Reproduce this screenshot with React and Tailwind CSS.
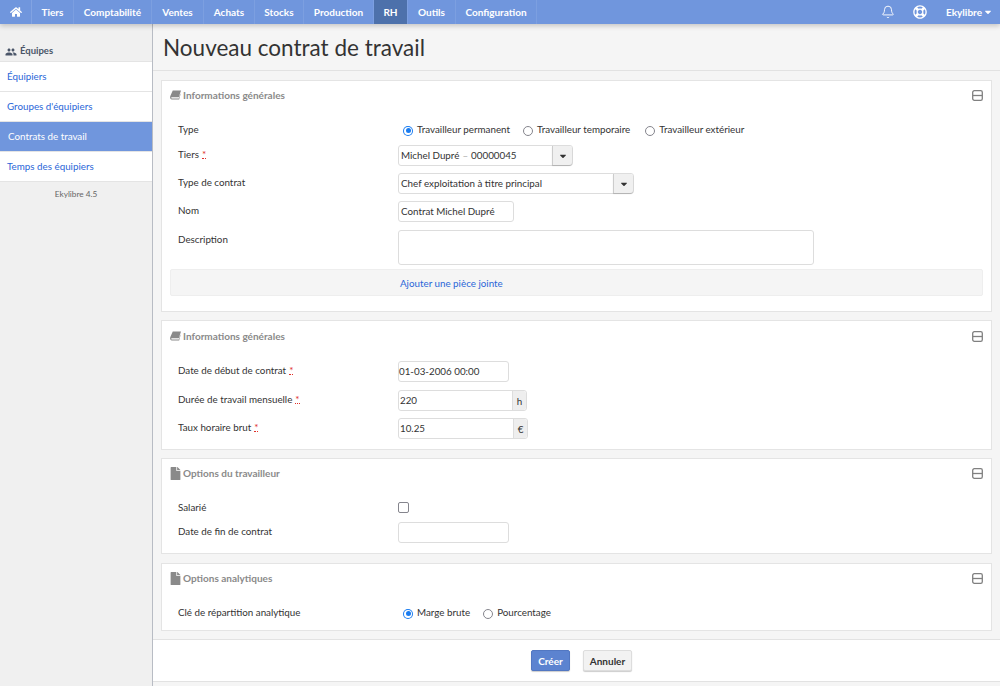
import React from 'react';
import { FaHome, FaFile, FaRegLifeRing, FaCaretDown } from 'react-icons/fa';
import { MdPeople } from 'react-icons/md';
import { Bell } from 'lucide-react';

const navItems = [
  { label: 'Tiers', w: 'w-[42px]' },
  { label: 'Comptabilité', w: 'w-[78px]' },
  { label: 'Ventes', w: 'w-[52px]' },
  { label: 'Achats', w: 'w-[51px]' },
  { label: 'Stocks', w: 'w-[49px]' },
  { label: 'Production', w: 'w-[70px]' },
  { label: 'RH', w: 'w-[34px]', active: true },
  { label: 'Outils', w: 'w-[48px]' },
  { label: 'Configuration', w: 'w-[81px]' },
];

const sideItems = [
  { label: 'Équipiers' },
  { label: "Groupes d'équipiers" },
  { label: 'Contrats de travail', active: true },
  { label: 'Temps des équipiers' },
];

const BookIcon = ({ className = '' }) => (
  <svg viewBox="0 0 12 10" className={className} fill="currentColor">
    <path d="M3 0H12L9.6 7.4H2C1 7.4 1 8.8 2 8.8H9.6L11.4 3V4.5L10 9.8H2C-0.2 9.8 -0.2 7 0.6 5.6Z" />
  </svg>
);

const FileIcon = ({ className = '' }) => <FaFile className={className} />;

const CollapseIcon = () => (
  <svg viewBox="0 0 11 11" className="ml-auto w-[11px] h-[11px] text-[#808080]" fill="none" stroke="currentColor" strokeWidth="1.3">
    <rect x="0.7" y="0.7" width="9.6" height="9.6" rx="1.6" />
    <path d="M1 5.5H10" />
  </svg>
);

const Required = () => (
  <span className="ml-[3px] text-[#e0302a] border-b border-dotted border-[#e0302a] leading-[9px] inline-block h-[9px] text-[10px]">*</span>
);

const Label = ({ children, required }) => (
  <div className="w-[236px] pl-[16px] shrink-0 leading-[19px]">
    {children}
    {required && <Required />}
  </div>
);

const Radio = ({ checked, label, className = '' }) => (
  <span className={`flex items-center ${className}`}>
    {checked ? (
      <span className="w-[10px] h-[10px] rounded-full bg-[#1a7cf0] flex items-center justify-center mt-[3px]">
        <span className="w-[8px] h-[8px] rounded-full bg-white flex items-center justify-center">
          <span className="w-[5px] h-[5px] rounded-full bg-[#1a7cf0]" />
        </span>
      </span>
    ) : (
      <span className="w-[10px] h-[10px] rounded-full border border-[#85858d] bg-white mt-[3px]" />
    )}
    <span className="ml-[4px]">{label}</span>
  </span>
);

const Input = ({ value, className = '' }) => (
  <div className={`h-[21px] bg-white border border-[#dddddd] rounded-[3px] flex items-center pb-[1px] ${className}`}>
    {value}
  </div>
);

const SelectInput = ({ value, width, children }) => (
  <div className={`h-[21px] flex bg-white border border-[#dddddd] rounded-[3px] ${width}`}>
    <div className="flex-1 px-[2px] pb-[1px] flex items-center">{children || value}</div>
    <div className="w-[20px] bg-[#f0f0f0] border-l border-[#cccccc] flex items-center justify-center rounded-r-[3px] shadow-[0_1px_1px_rgba(0,0,0,0.2)]">
      <FaCaretDown className="w-[10px] h-[10px] text-[#333333]" />
    </div>
  </div>
);

const AddonInput = ({ value, addon, width }) => (
  <div className={`h-[21px] flex bg-white border border-[#dddddd] rounded-[3px] ${width}`}>
    <div className="flex-1 px-[1px] pb-[1px] flex items-center">{value}</div>
    <div className="w-[14px] bg-[#eeeeee] border-l border-[#dddddd] flex items-center justify-center rounded-r-[3px]">{addon}</div>
  </div>
);

const Panel = ({ icon: Icon, iconClass, title, className = '', children }) => (
  <section className={`bg-white border border-[#e4e4e4] mx-[8px] shrink-0 ${className}`}>
    <div className="flex items-center h-[28px] px-[8px]">
      <span className="w-[11px] flex justify-center mr-[2px] text-[#8a8a8a]">
        <Icon className={`shrink-0 ${iconClass}`} />
      </span>
      <span className="text-[#8a8a8a] font-bold text-[10px]">{title}</span>
      <CollapseIcon />
    </div>
    {children}
  </section>
);

export default function App() {
  return (
    <div className="w-[1000px] h-[686px] overflow-hidden bg-[#f5f5f5] text-[9.8px] leading-[14px] text-[#333333] flex flex-col" style={{ fontFamily: 'Lato, "Open Sans", sans-serif' }}>
      {/* Top nav */}
      <header className="h-[24px] shrink-0 bg-[#7096dd] flex items-stretch text-white font-bold text-[10px] shadow-[0_2px_5px_rgba(0,0,0,0.2)] relative z-10">
        <div className="w-[32px] border-r border-[#82a3e2] flex items-center justify-center">
          <FaHome className="w-[12px] h-[12px]" />
        </div>
        {navItems.map((item) => (
          <div
            key={item.label}
            className={`${item.w} border-r border-[#7c9fe0] flex items-center justify-center ${item.active ? 'bg-[#4d71ab]' : ''}`}
          >
            {item.label}
          </div>
        ))}
        <div className="ml-auto flex items-center">
          <Bell className="w-[14px] h-[14px] mr-[18px]" strokeWidth={1.6} />
          <FaRegLifeRing className="w-[14px] h-[14px] mr-[19px]" />
          <span className="mr-[1px]">Ekylibre</span>
          <FaCaretDown className="w-[10px] h-[10px] mr-[7px]" />
        </div>
      </header>

      <div className="flex-1 flex min-h-0">
        {/* Sidebar */}
        <aside className="w-[153px] shrink-0 bg-[#f0f0f0] border-r border-[#b8bcc4]">
          <div className="h-[37px] flex items-end pb-[3px] pl-[5px] font-bold text-[#4a5568] text-[9.5px]">
            <MdPeople className="w-[12px] h-[12px] mr-[3px]" />
            Équipes
          </div>
          <nav className="border-t border-[#e4e4e4]">
            {sideItems.map((item) => (
              <div
                key={item.label}
                className={`h-[30px] flex items-center border-b border-[#e4e4e4] pb-[1px] ${item.active ? 'bg-[#7096dd] text-white pl-[8px]' : 'bg-white text-[#2a66d8] pl-[7px]'}`}
              >
                {item.label}
              </div>
            ))}
          </nav>
          <div className="text-center text-[#666666] text-[8.25px] mt-[5px]">Ekylibre 4.5</div>
        </aside>

        {/* Main */}
        <main className="flex-1 flex flex-col min-w-0">
          <div className="h-[47px] shrink-0 border-b border-[#e2e2e2] pl-[10px] flex items-center">
            <h1 className="text-[22.5px] leading-[30px] mt-[2px]">Nouveau contrat de travail</h1>
          </div>

          <Panel icon={BookIcon} iconClass="w-[11px] h-[10px]" title="Informations générales" className="mt-[9px] h-[232px]">
            <div className="flex h-[14px] mt-[13px] leading-[14px]">
              <div className="w-[236px] pl-[16px] shrink-0">Type</div>
              <div className="flex">
                <Radio checked label="Travailleur permanent" className="ml-[5px]" />
                <Radio label="Travailleur temporaire" className="ml-[13px]" />
                <Radio label="Travailleur extérieur" className="ml-[15px]" />
              </div>
            </div>
            <div className="flex mt-[9px]">
              <Label required>Tiers</Label>
              <SelectInput width="w-[175px]">
                Michel Dupré<span className="text-[#aaaaaa] mx-[3px]">–</span>00000045
              </SelectInput>
            </div>
            <div className="flex mt-[7px]">
              <Label>Type de contrat</Label>
              <SelectInput value="Chef exploitation à titre principal" width="w-[236px]" />
            </div>
            <div className="flex mt-[7px]">
              <Label>Nom</Label>
              <Input value="Contrat Michel Dupré" className="w-[116px] px-[2px]" />
            </div>
            <div className="flex mt-[8px]">
              <Label>Description</Label>
              <div className="w-[416px] h-[35px] bg-white border border-[#dddddd] rounded-[3px]" />
            </div>
            <div className="mx-[8px] mt-[4px] h-[27px] bg-[#f5f5f5] border border-[#eeeeee] rounded-[2px] flex items-center pl-[229px] pt-[1px] text-[#2a66d8]">
              Ajouter une pièce jointe
            </div>
          </Panel>

          <Panel icon={BookIcon} iconClass="w-[11px] h-[10px]" title="Informations générales" className="mt-[8px] h-[130px] pt-px">
            <div className="flex mt-[11px]">
              <Label required>Date de début de contrat</Label>
              <Input value="01-03-2006 00:00" className="w-[111px]" />
            </div>
            <div className="flex mt-[8px]">
              <Label required>Durée de travail mensuelle</Label>
              <AddonInput value="220" addon="h" width="w-[129px]" />
            </div>
            <div className="flex mt-[7px]">
              <Label required>Taux horaire brut</Label>
              <AddonInput value="10.25" addon="€" width="w-[130px]" />
            </div>
          </Panel>

          <Panel icon={FileIcon} iconClass="w-[13px] h-[13px]" title="Options du travailleur" className="mt-[8px] h-[96px]">
            <div className="flex mt-[14px] h-[14px] leading-[13px]">
              <div className="w-[236px] pl-[16px] shrink-0">Salarié</div>
              <span className="w-[10.5px] h-[10.5px] mt-[1px] border-[1.5px] border-[#85858d] rounded-[2px] bg-white" />
            </div>
            <div className="flex mt-[7px]">
              <Label>Date de fin de contrat</Label>
              <Input className="w-[111px]" />
            </div>
          </Panel>

          <Panel icon={FileIcon} iconClass="w-[13px] h-[13px]" title="Options analytiques" className="mt-[9px] h-[68px]">
            <div className="flex h-[14px] mt-[13px]">
              <div className="w-[236px] pl-[16px] shrink-0">Clé de répartition analytique</div>
              <div className="flex">
                <Radio checked label="Marge brute" className="ml-[5px]" />
                <Radio label="Pourcentage" className="ml-[13px]" />
              </div>
            </div>
          </Panel>

          <div className="mt-[8px] h-[43px] shrink-0 bg-white border-y border-[#e2e2e2] flex items-center pl-[378px] text-[10px]">
            <button className="w-[39px] h-[21px] rounded-[2px] bg-[#5c83d0] border border-[#5277c2] text-white font-bold shadow-[0_1px_1px_rgba(0,0,0,0.2)]">Créer</button>
            <button className="ml-[13px] w-[49px] h-[21px] rounded-[2px] bg-[#f2f2f2] border border-[#dddddd] font-bold shadow-[0_1px_1px_rgba(0,0,0,0.2)]">Annuler</button>
          </div>
        </main>
      </div>
    </div>
  );
}
